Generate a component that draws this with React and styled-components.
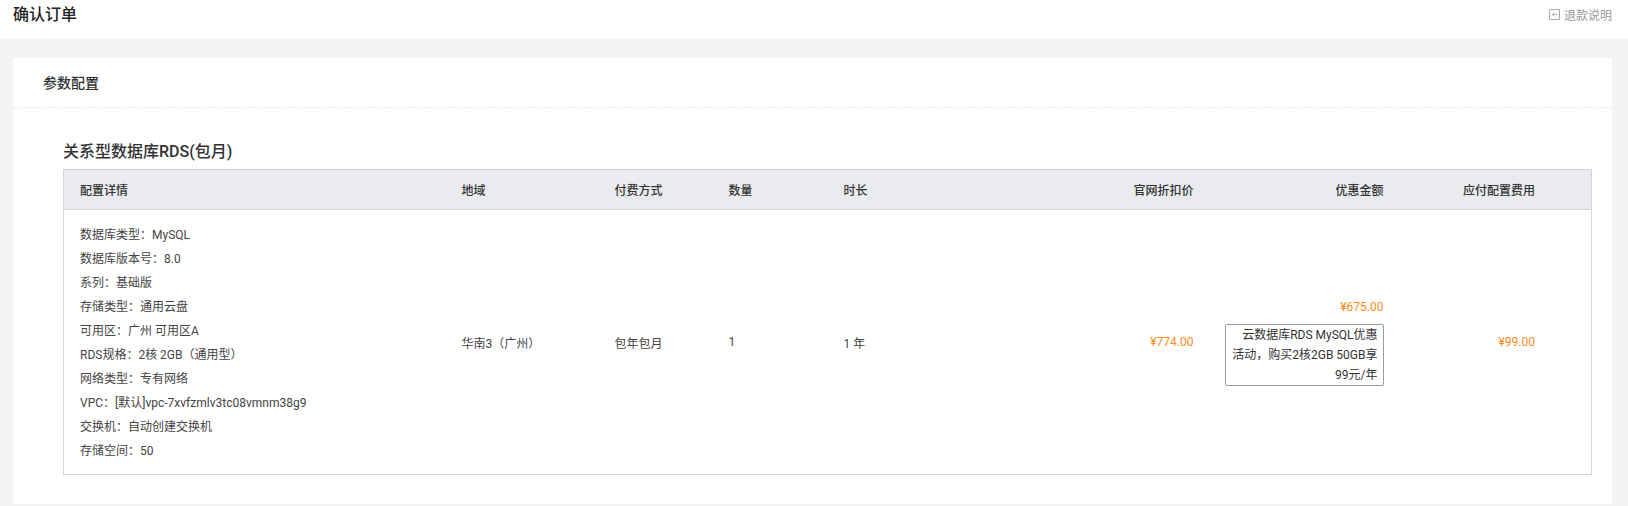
import React from "react";
import styled, { createGlobalStyle } from "styled-components";

const Global = createGlobalStyle`
  html, body { margin: 0; padding: 0; background: #f4f4f4; }
  body { font-family: Roboto, "Noto Sans CJK SC", sans-serif; font-size: 12px; color: #333; }
`;
const Page = styled.div`
  width: 1628px;
  height: 506px;
  overflow: hidden;
  display: flex;
  flex-direction: column;
`;
const TopBar = styled.header`
  height: 39px;
  flex: none;
  background: #fff;
  display: flex;
  justify-content: space-between;
  align-items: flex-start;
  padding: 0 16px 0 13px;
`;
const PageTitle = styled.h1`
  margin: 0;
  font-size: 16px;
  line-height: 29px;
  font-weight: 500;
  color: #222;
`;
const HelpLink = styled.a`
  display: flex;
  align-items: center;
  gap: 4px;
  height: 28px;
  color: #999;
  font-size: 12px;
`;
const Card = styled.section`
  margin: 19px 16px 0 13px;
  height: 446px;
  background: #fff;
`;
const CardHead = styled.div`
  height: 50px;
  box-sizing: border-box;
  padding: 0 0 1px 30px;
  display: flex;
  align-items: center;
  border-bottom: 1px dashed #ececec;
  font-size: 14px;
  font-weight: 500;
  color: #333;
`;
const CardBody = styled.div`
  padding: 32px 21px 0 50px;
`;
const ProductName = styled.h2`
  margin: 0;
  font-size: 16px;
  line-height: 24px;
  font-weight: 500;
  color: #333;
  height: 29px;
`;
const Table = styled.table`
  width: 1529px;
  border-collapse: collapse;
  table-layout: fixed;
  border: 1px solid #d5d5d8;
`;
const HeadRow = styled.tr`
  height: 40px;
  background: #e9ebee;
  border-bottom: 1px solid #d5d5d8;
`;
const Th = styled.th`
  padding: 0 ${(p) => p.$pr || 16}px 0 16px;
  font-size: 12px;
  font-weight: 500;
  color: #333;
  text-align: ${(p) => (p.$right ? "right" : "left")};
`;
const Td = styled.td`
  padding: 12px ${(p) => p.$pr || 16}px 12px 16px;
  font-size: 12px;
  color: #444;
  vertical-align: middle;
  text-align: ${(p) => (p.$right ? "right" : "left")};
`;
const SpecCell = styled(Td)`
  padding-top: 13px;
  padding-bottom: 11px;
`;
const DiscountCell = styled(Td)`
  padding-left: 15px;
`;
const Spec = styled.div`
  line-height: 24px;
  white-space: nowrap;
`;
const Price = styled.span`
  color: #ff8a20;
`;
const PriceLine = styled.div`
  line-height: 22px;
  color: #ff8a20;
  margin-bottom: 6px;
`;
const PromoBox = styled.div`
  box-sizing: border-box;
  width: 159px;
  margin-bottom: 2px;
  padding: 0 5px;
  border: 1px solid #999;
  border-radius: 2px;
  line-height: 20px;
  text-align: right;
  color: #333;
`;

const specs = [
  "数据库类型：MySQL",
  "数据库版本号：8.0",
  "系列：基础版",
  "存储类型：通用云盘",
  "可用区：广州 可用区A",
  "RDS规格：2核 2GB（通用型）",
  "网络类型：专有网络",
  "VPC：[默认]vpc-7xvfzmlv3tc08vmnm38g9",
  "交换机：自动创建交换机",
  "存储空间：50",
];

const ReturnIcon = () => (
  <svg width="11" height="11" viewBox="0 0 11 11" fill="none" stroke="#aaa" strokeWidth="1">
    <path d="M.5.5h10v10H.5z" />
    <path d="M8 5.5H3.5M5.2 3.8 3.5 5.5l1.7 1.7" />
  </svg>
);

export default function App() {
  return (
    <Page>
      <Global />
      <TopBar>
        <PageTitle>确认订单</PageTitle>
        <HelpLink>
          <ReturnIcon />
          退款说明
        </HelpLink>
      </TopBar>
      <Card>
        <CardHead>参数配置</CardHead>
        <CardBody>
          <ProductName>关系型数据库RDS(包月)</ProductName>
          <Table>
            <colgroup>
              <col style={{ width: 382 }} />
              <col style={{ width: 153 }} />
              <col style={{ width: 114 }} />
              <col style={{ width: 115 }} />
              <col style={{ width: 181 }} />
              <col style={{ width: 201 }} />
              <col style={{ width: 190 }} />
              <col />
            </colgroup>
            <thead>
              <HeadRow>
                <Th>配置详情</Th>
                <Th>地域</Th>
                <Th>付费方式</Th>
                <Th>数量</Th>
                <Th>时长</Th>
                <Th $right>官网折扣价</Th>
                <Th $right>优惠金额</Th>
                <Th $right $pr={56}>应付配置费用</Th>
              </HeadRow>
            </thead>
            <tbody>
              <tr>
                <SpecCell>
                  {specs.map((s) => (
                    <Spec key={s}>{s}</Spec>
                  ))}
                </SpecCell>
                <Td>华南3（广州）</Td>
                <Td>包年包月</Td>
                <Td>1</Td>
                <Td>1 年</Td>
                <Td $right><Price>¥774.00</Price></Td>
                <DiscountCell $right>
                  <PriceLine>¥675.00</PriceLine>
                  <PromoBox>云数据库RDS MySQL优惠活动，购买2核2GB 50GB享99元/年</PromoBox>
                </DiscountCell>
                <Td $right $pr={56}><Price>¥99.00</Price></Td>
              </tr>
            </tbody>
          </Table>
        </CardBody>
      </Card>
    </Page>
  );
}
